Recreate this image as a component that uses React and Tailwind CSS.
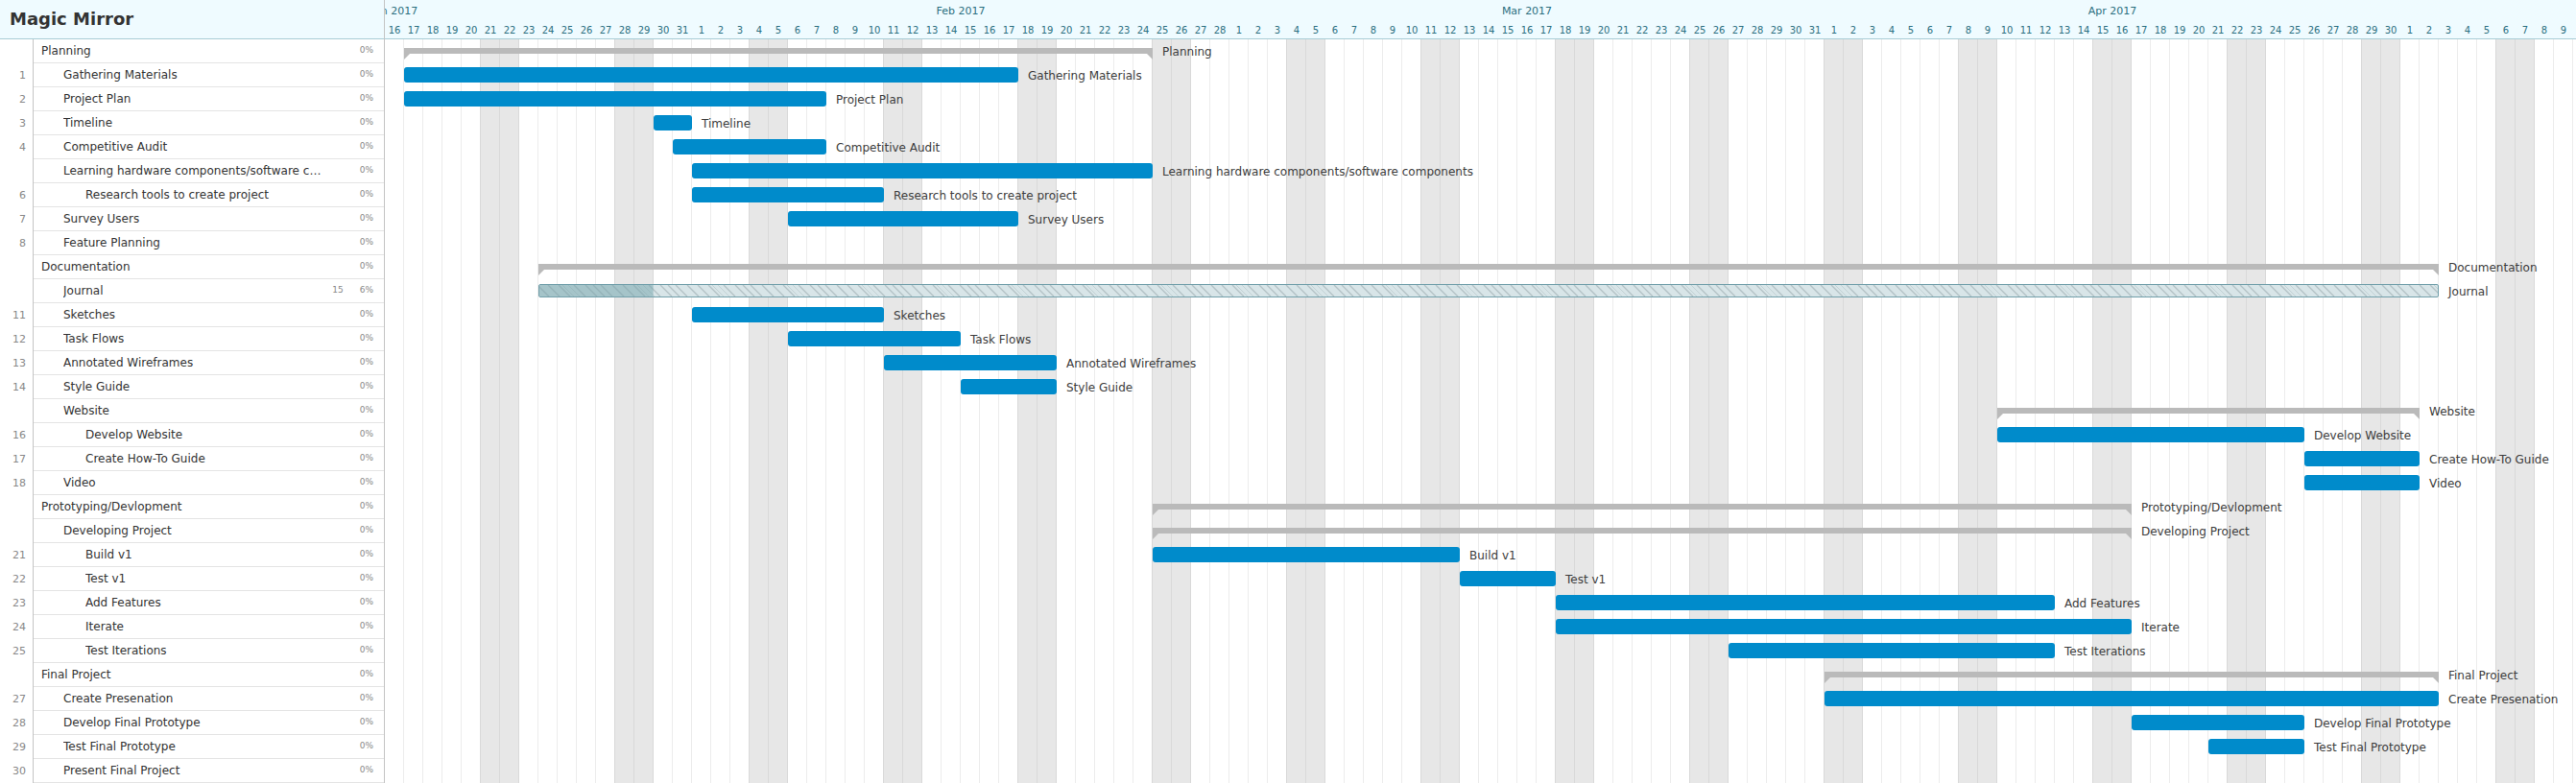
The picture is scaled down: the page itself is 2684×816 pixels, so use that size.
const MONTHS = [
  { name: "Jan 2017", days: 31 },
  { name: "Feb 2017", days: 28 },
  { name: "Mar 2017", days: 31 },
  { name: "Apr 2017", days: 30 },
  { name: "May 2017", days: 31 },
];

const DAY = 20;

// start and end are days counted from 1 January; depth sets the indent.
const TASKS = [
  { name: "Planning", depth: 0, start: 16, end: 55, kind: "group" },
  { num: 1, name: "Gathering Materials", depth: 1, start: 16, end: 48 },
  { num: 2, name: "Project Plan", depth: 1, start: 16, end: 38 },
  { num: 3, name: "Timeline", depth: 1, start: 29, end: 31 },
  { num: 4, name: "Competitive Audit", depth: 1, start: 30, end: 38 },
  { name: "Learning hardware components/software components", depth: 1, start: 31, end: 55 },
  { num: 6, name: "Research tools to create project", depth: 2, start: 31, end: 41 },
  { num: 7, name: "Survey Users", depth: 1, start: 36, end: 48 },
  { num: 8, name: "Feature Planning", depth: 1 },
  { name: "Documentation", depth: 0, start: 23, end: 122, kind: "group" },
  { name: "Journal", depth: 1, start: 23, end: 122, kind: "progress", count: 15, percent: 6 },
  { num: 11, name: "Sketches", depth: 1, start: 31, end: 41 },
  { num: 12, name: "Task Flows", depth: 1, start: 36, end: 45 },
  { num: 13, name: "Annotated Wireframes", depth: 1, start: 41, end: 50 },
  { num: 14, name: "Style Guide", depth: 1, start: 45, end: 50 },
  { name: "Website", depth: 1, start: 99, end: 121, kind: "group" },
  { num: 16, name: "Develop Website", depth: 2, start: 99, end: 115 },
  { num: 17, name: "Create How-To Guide", depth: 2, start: 115, end: 121 },
  { num: 18, name: "Video", depth: 1, start: 115, end: 121 },
  { name: "Prototyping/Devlopment", depth: 0, start: 55, end: 106, kind: "group" },
  { name: "Developing Project", depth: 1, start: 55, end: 106, kind: "group" },
  { num: 21, name: "Build v1", depth: 2, start: 55, end: 71 },
  { num: 22, name: "Test v1", depth: 2, start: 71, end: 76 },
  { num: 23, name: "Add Features", depth: 2, start: 76, end: 102 },
  { num: 24, name: "Iterate", depth: 2, start: 76, end: 106 },
  { num: 25, name: "Test Iterations", depth: 2, start: 85, end: 102 },
  { name: "Final Project", depth: 0, start: 90, end: 122, kind: "group" },
  { num: 27, name: "Create Presenation", depth: 1, start: 90, end: 122 },
  { num: 28, name: "Develop Final Prototype", depth: 1, start: 106, end: 115 },
  { num: 29, name: "Test Final Prototype", depth: 1, start: 110, end: 115 },
  { num: 30, name: "Present Final Project", depth: 1 },
];

const INDENT = ["pl-2", "pl-[31px]", "pl-[54px]"];

const DAYS = MONTHS.flatMap((m) => Array.from({ length: m.days }, (_, i) => i + 1));
const isWeekend = (n) => n % 7 === 6 || n % 7 === 0;

function dayClass(n) {
  if (isWeekend(n)) return "bg-[#e7e7e7] border-[#d9d9d9]";
  return isWeekend(n + 1) ? "border-[#d9d9d9]" : "border-[#ececec]";
}

function TaskRow({ task }) {
  return (
    <li className="flex h-[25px]">
      <span className="w-[35px] shrink-0 border-r border-[#c4c4c4] pr-[7px] text-right text-[11px] leading-[25px] text-[#888]">
        {task.num}
      </span>
      <div className={`flex min-w-0 flex-1 border-b border-[#e4e4e4] pr-[11px] ${INDENT[task.depth]}`}>
        <span className="w-[270px] truncate text-xs leading-6 text-[#333]">{task.name}</span>
        <span className="ml-auto flex shrink-0 gap-[17px] text-[9px] leading-[22px] text-[#888]">
          {task.count && <span>{task.count}</span>}
          <span>{task.percent ?? 0}%</span>
        </span>
      </div>
    </li>
  );
}

function Bar({ task }) {
  const style = { width: (task.end - task.start) * DAY };
  if (task.kind === "group") {
    return (
      <div className="mb-[3px] flex h-3 shrink-0 flex-col" style={style}>
        <div className="h-1.5 bg-[#bababa]" />
        <div className="flex justify-between">
          <svg className="size-1.5" viewBox="0 0 6 6" fill="#bababa" aria-hidden="true">
            <path d="M0 0H6L0 6Z" />
          </svg>
          <svg className="size-1.5" viewBox="0 0 6 6" fill="#bababa" aria-hidden="true">
            <path d="M0 0H6V6Z" />
          </svg>
        </div>
      </div>
    );
  }
  if (task.kind === "progress") {
    return (
      <div
        className="h-3.5 shrink-0 overflow-hidden rounded-[2px] border border-[#729faa] bg-[#d8e5e8]"
        style={style}
      >
        <svg className="block h-full w-full" aria-hidden="true">
          <defs>
            <pattern id="hatch" width="78" height="12" patternUnits="userSpaceOnUse">
              <path
                d="M-2 0l12 12M9 0l12 12M20 0l12 12M36 0l12 12M48 0l12 12M56 0l12 12M64 0l12 12M76 0l12 12"
                stroke="#b3c2c6"
                strokeWidth="1.4"
              />
              <path d="M24 0l12 12M30 0l12 12" stroke="#bccbcf" strokeWidth="0.8" />
            </pattern>
          </defs>
          <rect width="100%" height="100%" fill="url(#hatch)" />
          <rect width={`${task.percent}%`} height="100%" fill="#76a4ac" fillOpacity="0.52" />
        </svg>
      </div>
    );
  }
  return <div className="h-4 shrink-0 rounded-[3px] bg-[#008bcb]" style={style} />;
}

function ChartRow({ task }) {
  const align = task.kind === "group" ? "items-end" : "items-center";
  return (
    <li className="flex h-[25px]">
      {task.end && (
        <div className="flex" style={{ marginLeft: task.start * DAY }}>
          <div className={`flex h-6 ${align}`}>
            <Bar task={task} />
          </div>
          <span className="pl-2.5 text-xs leading-[26px] whitespace-nowrap text-[#3c3c3c]">{task.name}</span>
        </div>
      )}
    </li>
  );
}

export default function App() {
  return (
    <div className="flex overflow-hidden bg-white font-['DejaVu_Sans',sans-serif]">
      <aside className="w-[401px] shrink-0 border-r border-[#c4c4c4]">
        <header className="flex h-[41px] items-center border-b border-[#a9ccd6] bg-[#effbff] pl-2.5">
          <h1 className="text-lg font-bold text-[#333]">Magic Mirror</h1>
        </header>
        <ul>
          {TASKS.map((task) => (
            <TaskRow key={task.name} task={task} />
          ))}
        </ul>
      </aside>

      <main className="min-w-0 flex-1 overflow-hidden">
        <div className="-ml-[300px] w-max">
          <header className="h-[41px] border-b border-[#a9ccd6] bg-[#effbff] text-[#2b6f80]">
            <div className="flex text-center text-[11px] leading-[23px]">
              {MONTHS.map((m) => (
                <span key={m.name} style={{ width: m.days * DAY }}>
                  {m.name}
                </span>
              ))}
            </div>
            <div className="flex text-center text-[10px] leading-[17px]">
              {DAYS.map((d, n) => (
                <span key={n} className="w-5">
                  {d}
                </span>
              ))}
            </div>
          </header>
          <div className="grid">
            <div className="col-start-1 row-start-1 flex">
              {DAYS.map((d, n) => (
                <div key={n} className={`w-5 border-r ${dayClass(n)}`} />
              ))}
            </div>
            <ul className="relative col-start-1 row-start-1">
              {TASKS.map((task) => (
                <ChartRow key={task.name} task={task} />
              ))}
            </ul>
          </div>
        </div>
      </main>
    </div>
  );
}
